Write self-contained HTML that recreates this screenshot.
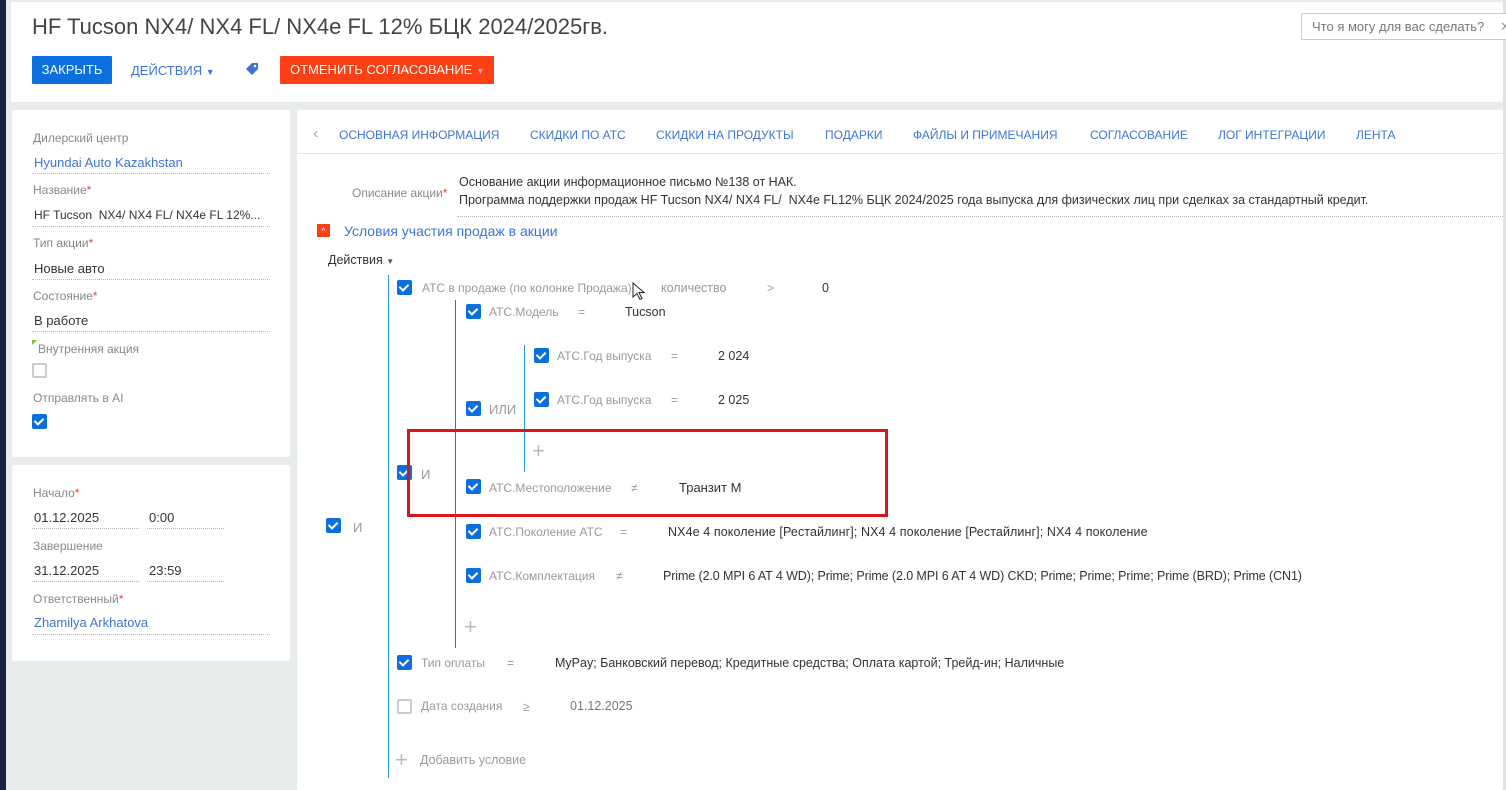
<!DOCTYPE html>
<html><head><meta charset="utf-8">
<style>
*{margin:0;padding:0;box-sizing:border-box}
body{width:1506px;height:790px;overflow:hidden;background:#e8ebec;font-family:"Liberation Sans",sans-serif;position:relative;color:#333}
.a{position:absolute;white-space:nowrap}
.panel{position:absolute;background:#fff;border-radius:2px}
.lbl{font-size:12px;color:#888}
.val{font-size:13px;color:#333}
.link{color:#3f74d6}
.dot{position:absolute;border-bottom:1px dotted #bbb}
.cb{position:absolute;width:15px;height:15px;background:#0b6fde;border-radius:2px}
.cb::after{content:"";position:absolute;left:4px;top:2px;width:4px;height:7px;border:solid #fff;border-width:0 2px 2px 0;transform:rotate(45deg)}
.cbe{position:absolute;width:15px;height:15px;border:2px solid #ccc;border-radius:2px;background:#fff}
.req{color:#e8422e}
.tab{font-size:12px;color:#3f74d6;top:128px}
.f{font-size:12px;color:#999}
.v{font-size:12.5px;color:#333}
.vl{position:absolute;width:1px;background:#2596d8}
.plus{position:absolute;color:#bbb;font-size:22px;font-weight:300;line-height:1}
</style></head><body>
<div style="position:absolute;left:0;top:0;width:6px;height:790px;background:#13223f"></div>
<div style="position:absolute;left:1503px;top:0;width:3px;height:790px;background:#dfe2e3"></div>

<div class="panel" style="left:11px;top:2px;width:1492px;height:100px"></div>
<div class="a" style="left:32px;top:14px;font-size:22px;color:#444">HF Tucson NX4/ NX4 FL/ NX4e FL 12% БЦК 2024/2025гв.</div>
<div class="a" style="left:32px;top:56px;width:80px;height:28px;background:#0b6fde;color:#fff;font-size:13px;text-align:center;line-height:28px;border-radius:1px">ЗАКРЫТЬ</div>
<div class="a" style="left:131px;top:63px;font-size:13px;color:#3f74d6">ДЕЙСТВИЯ <span style="font-size:9px">▼</span></div>
<svg class="a" style="left:245px;top:62px" width="14" height="14" viewBox="0 0 14 14"><path d="M7 1h6v6l-6 6-6-6z" fill="#3f74d6"/><circle cx="10" cy="4" r="1.3" fill="#fff"/></svg>
<div class="a" style="left:280px;top:56px;width:214px;height:28px;background:#fa4014;color:#fff;font-size:13px;line-height:28px;padding-left:10px;border-radius:1px">ОТМЕНИТЬ СОГЛАСОВАНИЕ <span style="font-size:9px;color:#f9a">▼</span></div>
<div class="a" style="left:1301px;top:13px;width:210px;height:27px;border:1px solid #ccc;background:#fff;font-size:13px;color:#777;line-height:25px;padding-left:10px">Что я могу для вас сделать?<span style="position:absolute;left:198px;color:#999">✕</span></div>

<div class="panel" style="left:12px;top:110px;width:278px;height:347px"></div>
<div class="a lbl" style="left:33px;top:131px">Дилерский центр</div>
<div class="a val link" style="left:34px;top:155px">Hyundai Auto Kazakhstan</div>
<div class="dot" style="left:32px;top:173px;width:238px"></div>
<div class="a lbl" style="left:33px;top:183px">Название<span class="req">*</span></div>
<div class="a val" style="left:34px;top:208px;font-size:12px">HF Tucson&nbsp; NX4/ NX4 FL/ NX4e FL 12%...</div>
<div class="dot" style="left:32px;top:226px;width:238px"></div>
<div class="a lbl" style="left:33px;top:236px">Тип акции<span class="req">*</span></div>
<div class="a val" style="left:34px;top:261px">Новые авто</div>
<div class="dot" style="left:32px;top:279px;width:238px"></div>
<div class="a lbl" style="left:33px;top:289px">Состояние<span class="req">*</span></div>
<div class="a val" style="left:34px;top:313px">В работе</div>
<div class="dot" style="left:32px;top:331px;width:238px"></div>
<div class="a" style="left:32px;top:340px;width:0;height:0;border-top:5px solid #7bc043;border-right:5px solid transparent"></div>
<div class="a lbl" style="left:38px;top:342px">Внутренняя акция</div>
<div class="cbe" style="left:32px;top:363px"></div>
<div class="a lbl" style="left:33px;top:391px">Отправлять в AI</div>
<div class="cb" style="left:32px;top:414px"></div>

<div class="panel" style="left:12px;top:465px;width:278px;height:196px"></div>
<div class="a lbl" style="left:33px;top:486px">Начало<span class="req">*</span></div>
<div class="a val" style="left:34px;top:510px">01.12.2025</div>
<div class="dot" style="left:32px;top:528px;width:107px"></div>
<div class="a val" style="left:149px;top:510px">0:00</div>
<div class="dot" style="left:147px;top:528px;width:77px"></div>
<div class="a lbl" style="left:33px;top:539px">Завершение</div>
<div class="a val" style="left:34px;top:563px">31.12.2025</div>
<div class="dot" style="left:32px;top:581px;width:107px"></div>
<div class="a val" style="left:149px;top:563px">23:59</div>
<div class="dot" style="left:147px;top:581px;width:77px"></div>
<div class="a lbl" style="left:33px;top:592px">Ответственный<span class="req">*</span></div>
<div class="a val link" style="left:34px;top:615px">Zhamilya Arkhatova</div>
<div class="dot" style="left:32px;top:634px;width:238px"></div>

<div class="panel" style="left:297px;top:110px;width:1206px;height:680px"></div>
<div style="position:absolute;left:297px;top:153px;width:1206px;border-top:1px solid #e3e3e3"></div>
<div class="a" style="left:313px;top:125px;font-size:16px;color:#aaa">‹</div>
<div class="a tab" style="left:339px">ОСНОВНАЯ ИНФОРМАЦИЯ</div>
<div class="a tab" style="left:530px">СКИДКИ ПО АТС</div>
<div class="a tab" style="left:656px">СКИДКИ НА ПРОДУКТЫ</div>
<div class="a tab" style="left:825px">ПОДАРКИ</div>
<div class="a tab" style="left:913px">ФАЙЛЫ И ПРИМЕЧАНИЯ</div>
<div class="a tab" style="left:1090px">СОГЛАСОВАНИЕ</div>
<div class="a tab" style="left:1218px">ЛОГ ИНТЕГРАЦИИ</div>
<div class="a tab" style="left:1356px">ЛЕНТА</div>

<div class="a lbl" style="left:352px;top:186px">Описание акции<span class="req">*</span></div>
<div class="a" style="left:459px;top:173px;font-size:12.5px;color:#333;line-height:18px">Основание акции информационное письмо №138 от НАК.<br>Программа поддержки продаж HF Tucson NX4/ NX4 FL/&nbsp; NX4e FL12% БЦК 2024/2025 года выпуска для физических лиц при сделках за стандартный кредит.</div>
<div class="dot" style="left:457px;top:216px;width:1046px"></div>
<div class="a" style="left:317px;top:224px;width:13px;height:13px;background:#fa4014;color:#fff;font-size:9px;text-align:center;line-height:14px">^</div>
<div class="a" style="left:344px;top:223px;font-size:14px;color:#3f74d6">Условия участия продаж в акции</div>
<div class="a" style="left:328px;top:253px;font-size:12.5px;color:#333">Действия <span style="font-size:8px;color:#555">▼</span></div>

<div class="vl" style="left:388px;top:275px;height:503px"></div>
<div class="vl" style="left:455px;top:300px;height:348px;background:#5a6a7a"></div>
<div class="vl" style="left:524px;top:345px;height:127px"></div>

<div class="cb" style="left:397px;top:280px"></div>
<div class="a f" style="left:422px;top:281px">АТС в продаже (по колонке Продажа)</div>
<div class="a f" style="left:661px;top:281px;font-size:12.5px">количество</div>
<div class="a f" style="left:767px;top:281px">&gt;</div>
<div class="a v" style="left:822px;top:281px">0</div>
<svg class="a" style="left:632px;top:282px" width="14" height="20" viewBox="0 0 14 20"><path d="M1 1v14l4-3.5 3 6 2-1-3-6h5z" fill="#fff" stroke="#222" stroke-width="1"/></svg>

<div class="cb" style="left:466px;top:304px"></div>
<div class="a f" style="left:489px;top:305px">АТС.Модель</div>
<div class="a f" style="left:578px;top:305px">=</div>
<div class="a v" style="left:625px;top:305px">Tucson</div>

<div class="cb" style="left:534px;top:348px"></div>
<div class="a f" style="left:557px;top:349px">АТС.Год выпуска</div>
<div class="a f" style="left:671px;top:349px">=</div>
<div class="a v" style="left:718px;top:349px">2 024</div>
<div class="cb" style="left:534px;top:392px"></div>
<div class="a f" style="left:557px;top:393px">АТС.Год выпуска</div>
<div class="a f" style="left:671px;top:393px">=</div>
<div class="a v" style="left:718px;top:393px">2 025</div>
<div class="cb" style="left:466px;top:401px"></div>
<div class="a f" style="left:489px;top:402px;font-size:13px">ИЛИ</div>
<div class="plus" style="left:532px;top:440px">+</div>

<div class="cb" style="left:397px;top:465px"></div>
<div class="a f" style="left:421px;top:467px;font-size:13px">И</div>
<div class="cb" style="left:466px;top:479px"></div>
<div class="a f" style="left:489px;top:481px">АТС.Местоположение</div>
<div class="a f" style="left:631px;top:481px">≠</div>
<div class="a v" style="left:679px;top:480px;font-size:13px">Транзит М</div>
<div class="a" style="left:407px;top:429px;width:481px;height:88px;border:3px solid #d9141b"></div>

<div class="cb" style="left:326px;top:518px"></div>
<div class="a f" style="left:353px;top:520px;font-size:13px">И</div>

<div class="cb" style="left:466px;top:524px"></div>
<div class="a f" style="left:489px;top:525px">АТС.Поколение АТС</div>
<div class="a f" style="left:620px;top:525px">=</div>
<div class="a v" style="left:668px;top:525px;font-size:12.5px;letter-spacing:0.1px">NX4e 4 поколение [Рестайлинг]; NX4 4 поколение [Рестайлинг]; NX4 4 поколение</div>
<div class="cb" style="left:466px;top:568px"></div>
<div class="a f" style="left:489px;top:569px">АТС.Комплектация</div>
<div class="a f" style="left:616px;top:569px">≠</div>
<div class="a v" style="left:663px;top:569px;letter-spacing:-0.1px">Prime (2.0 MPI 6 AT 4 WD); Prime; Prime (2.0 MPI 6 AT 4 WD) CKD; Prime; Prime; Prime; Prime (BRD); Prime (CN1)</div>
<div class="plus" style="left:464px;top:616px">+</div>

<div class="cb" style="left:397px;top:655px"></div>
<div class="a f" style="left:421px;top:656px">Тип оплаты</div>
<div class="a f" style="left:507px;top:656px">=</div>
<div class="a v" style="left:555px;top:656px">MyPay; Банковский перевод; Кредитные средства; Оплата картой; Трейд-ин; Наличные</div>
<div class="cbe" style="left:397px;top:699px"></div>
<div class="a f" style="left:421px;top:699px">Дата создания</div>
<div class="a f" style="left:523px;top:700px">≥</div>
<div class="a" style="left:570px;top:699px;font-size:12.5px;color:#777">01.12.2025</div>
<div class="plus" style="left:395px;top:749px">+</div>
<div class="a f" style="left:420px;top:753px;font-size:12.5px">Добавить условие</div>
</body></html>
